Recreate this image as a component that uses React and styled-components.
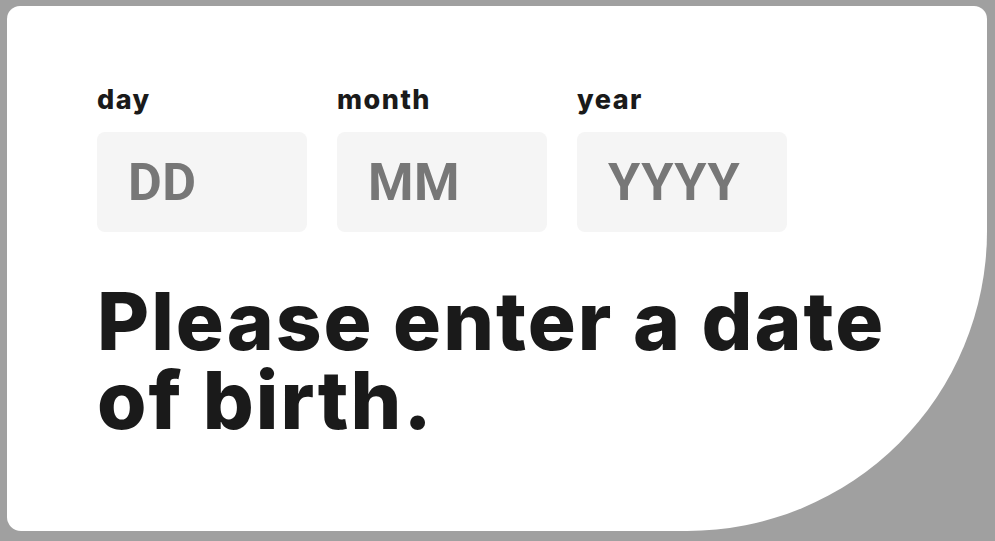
import React from "react";
import styled, { createGlobalStyle } from "styled-components";

const GlobalStyle = createGlobalStyle`
  body {
    margin: 0;
    background: #a0a0a0;
  }
`;

const Page = styled.div`
  padding: 6px 8px 10px 7px;
`;

const Card = styled.div`
  background: #ffffff;
  height: 525px;
  box-sizing: border-box;
  border-radius: 13px 13px 300px 14px;
  padding: 79px 0 0 90px;
  font-family: "Inter", "Noto Sans", sans-serif;
  color: #1a1a1a;
`;

const Fields = styled.div`
  display: flex;
  gap: 30px;
`;

const Field = styled.label`
  display: flex;
  flex-direction: column;
  gap: 18px;
  width: 210px;
`;

const Label = styled.span`
  font-size: 27px;
  font-weight: 800;
  line-height: 29px;
  letter-spacing: 1.5px;
`;

const Input = styled.input`
  box-sizing: border-box;
  width: 100%;
  height: 100px;
  border: none;
  outline: none;
  border-radius: 8px;
  background: #f5f5f5;
  padding: 0 0 0 31px;
  font-family: "Roboto", "Liberation Sans", sans-serif;
  font-weight: 700;
  font-size: 52px;
  letter-spacing: 0.5px;
  color: #1a1a1a;

  &::placeholder {
    color: #777777;
  }
`;

const Message = styled.h1`
  margin: 49px 0 0;
  font-size: 80px;
  font-weight: 800;
  line-height: 79px;
  letter-spacing: 2px;
  max-width: 820px;
`;

const fields = [
  { name: "day", placeholder: "DD" },
  { name: "month", placeholder: "MM" },
  { name: "year", placeholder: "YYYY" },
];

export default function App() {
  return (
    <>
      <GlobalStyle />
      <Page>
        <Card>
          <Fields>
            {fields.map((f) => (
              <Field key={f.name}>
                <Label>{f.name}</Label>
                <Input placeholder={f.placeholder} />
              </Field>
            ))}
          </Fields>
          <Message>Please enter a date of birth.</Message>
        </Card>
      </Page>
    </>
  );
}
